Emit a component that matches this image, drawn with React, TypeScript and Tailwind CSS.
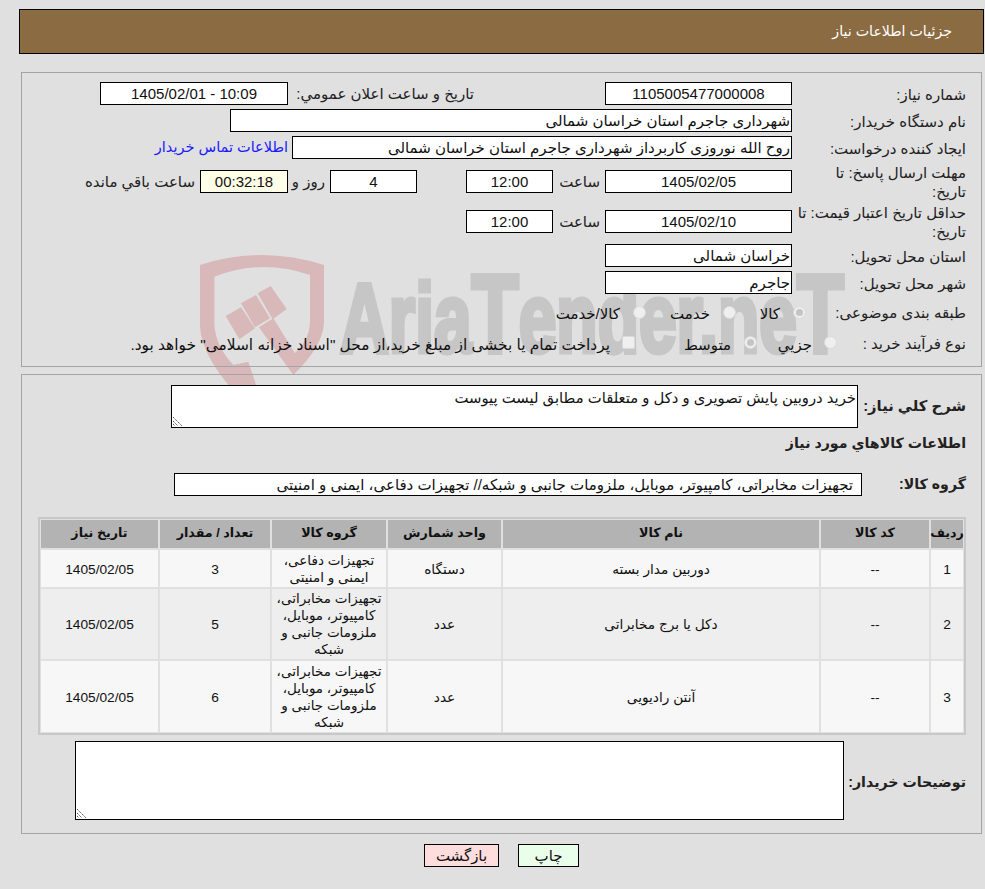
function Box({ className = '', children }: { className?: string; children?: React.ReactNode }) {
  return <div className={`flex shrink-0 items-center border border-black text-[15px] leading-none text-[#111] ${className}`}>{children}</div>;
}

function Label({ className = 'w-[189px] pt-[2px]', children }: { className?: string; children: React.ReactNode }) {
  return <div className={`shrink-0 pr-[15px] pl-[4px] text-[15px] leading-[19px] text-[#222] ${className}`}>{children}</div>;
}

function Radio({ checked }: { checked?: boolean }) {
  return (
    <span className="flex h-[13px] w-[13px] shrink-0 items-center justify-center rounded-full border border-[#dadada] bg-[#efefef]">
      {checked && <span className="h-[7px] w-[7px] rounded-full bg-[#c4c4c4]" />}
    </span>
  );
}

function Grip() {
  return (
    <svg className="absolute bottom-0 left-0" width="11" height="11" viewBox="0 0 11 11">
      <path d="M1 1 L10 10 M1 5 L6 10 M1 8 L3 10" stroke="#555" strokeWidth="1" strokeDasharray="1.5 0.8" />
    </svg>
  );
}

const rows = [
  { id: '1', name: 'دوربین مدار بسته', unit: 'دستگاه', group: 'تجهیزات دفاعی، ایمنی و امنیتی', qty: '3', h: 'h-[37px]' },
  { id: '2', name: 'دکل یا برج مخابراتی', unit: 'عدد', group: 'تجهیزات مخابراتی، کامپیوتر، موبایل، ملزومات جانبی و شبکه', qty: '5', h: 'h-[70px]' },
  { id: '3', name: 'آنتن رادیویی', unit: 'عدد', group: 'تجهیزات مخابراتی، کامپیوتر، موبایل، ملزومات جانبی و شبکه', qty: '6', h: 'h-[71px]' },
];

const cols = 'grid grid-cols-[32px_108px_316px_113px_114px_110px_117px] gap-[2px]';

export default function App() {
  return (
    <div dir="rtl" className="relative h-[889px] w-[985px] overflow-hidden bg-[#e0e0e0] font-['Liberation_Sans','DejaVu_Sans',sans-serif] text-[15px] text-[#111]">
      {/* watermark */}
      <div dir="ltr" className="pointer-events-none absolute top-[240px] left-[180px] h-[240px] w-[400px]">
        <svg width="400" height="240" viewBox="0 0 1200 720">
          <g fill="#d9b8ba">
            <path d="M60 75 Q245 15 432 75 V250 Q428 320 340 405 L237 262 L280 235 L345 340 Q388 300 390 250 V105 Q245 55 103 110 V255 Q108 320 160 375 L205 365 L230 440 L150 440 Q65 340 60 260 Z" />
            <path d="M137 228 L183 202 L225 265 L178 298 Z" />
            <path d="M183 190 L228 165 L270 235 L225 262 Z" />
            <path d="M233 160 L272 138 L320 207 L278 238 Z" />
          </g>
        </svg>
      </div>
      <div dir="ltr" className="pointer-events-none absolute top-[258px] left-[340px] origin-top-left scale-x-[0.69] text-[98px] leading-none font-bold whitespace-nowrap text-[#c6c6c6] [-webkit-text-stroke:5px_#c6c6c6]">
        Aria<span className="text-[112px]">T</span>ender.ne<span className="text-[112px]">T</span>
      </div>

      <div className="relative pt-[9px]">
        {/* header */}
        <div className="mr-[1px] ml-[19px] flex h-[45px] items-center border border-black bg-[#8b6b41] pr-[31px] text-[14.2px] text-white">
          جزئیات اطلاعات نیاز
        </div>

        {/* top panel */}
        <div className="mt-[18px] mr-[3px] ml-[21px] h-[295px] border border-[#a4a4a4] pt-[9px]">
          <div className="flex h-[23px] items-center">
            <Label>شماره نیاز:</Label>
            <Box className="h-[23px] w-[187px] justify-center bg-white">1105005477000008</Box>
            <div className="w-[317px] shrink-0 pt-[2px] pr-[131px] whitespace-nowrap text-[#222]">تاریخ و ساعت اعلان عمومي:</div>
            <Box className="h-[23px] w-[188px] justify-center bg-white">10:09 - 1405/02/01</Box>
          </div>
          <div className="mt-[4px] flex h-[23px] items-center">
            <Label>نام دستگاه خریدار:</Label>
            <Box className="h-[23px] w-[562px] bg-white pr-[1px]">شهرداری جاجرم استان خراسان شمالی</Box>
          </div>
          <div className="mt-[4px] flex h-[23px] items-center">
            <Label>ایجاد کننده درخواست:</Label>
            <Box className="h-[23px] w-[500px] bg-white pr-[1px]">روح الله نوروزی کاربرداز شهرداری جاجرم استان خراسان شمالی</Box>
            <span className="mr-[4px] text-[14.5px] whitespace-nowrap text-[#1a1aff]">اطلاعات تماس خریدار</span>
          </div>
          <div className="mt-[11px] flex h-[23px] items-center">
            <Label className="mt-[-7px] h-[23px] w-[189px] self-start">مهلت ارسال پاسخ: تا<br />تاریخ:</Label>
            <Box className="h-[23px] w-[187px] justify-center bg-white">1405/02/05</Box>
            <span className="w-[52px] shrink-0 pt-[2px] pr-[5px] text-[#222]">ساعت</span>
            <Box className="h-[23px] w-[87px] justify-center bg-white">12:00</Box>
            <span className="w-[49px] shrink-0" />
            <Box className="h-[23px] w-[87px] justify-center bg-white">4</Box>
            <span className="w-[42px] shrink-0 pt-[2px] pr-[5px] whitespace-nowrap text-[#222]">روز و</span>
            <Box className="h-[23px] w-[88px] justify-center bg-[#ffffe8]">00:32:18</Box>
            <span className="pt-[2px] pr-[5px] whitespace-nowrap text-[#222]">ساعت باقي مانده</span>
          </div>
          <div className="mt-[17px] flex h-[23px] items-center">
            <Label className="mt-[-7px] h-[23px] w-[189px] self-start">حداقل تاریخ اعتبار قیمت: تا<br />تاریخ:</Label>
            <Box className="h-[23px] w-[187px] justify-center bg-white">1405/02/10</Box>
            <span className="w-[52px] shrink-0 pt-[2px] pr-[5px] text-[#222]">ساعت</span>
            <Box className="h-[23px] w-[87px] justify-center bg-white">12:00</Box>
          </div>
          <div className="mt-[11px] flex h-[23px] items-center">
            <Label>استان محل تحویل:</Label>
            <Box className="h-[23px] w-[187px] bg-white pr-[1px]">خراسان شمالی</Box>
          </div>
          <div className="mt-[4px] flex h-[23px] items-center">
            <Label>شهر محل تحویل:</Label>
            <Box className="h-[23px] w-[187px] bg-white pr-[1px]">جاجرم</Box>
          </div>
          <div className="mt-[6px] flex h-[24px] items-center">
            <Label className="w-[147px] whitespace-nowrap">طبقه بندی موضوعی:</Label>
            <span className="mr-[28px] flex w-[70px] shrink-0 items-center gap-[13px]"><Radio checked /><span className="pt-[5px]">کالا</span></span>
            <span className="flex w-[90px] shrink-0 items-center gap-[13px]"><Radio /><span className="pt-[5px]">خدمت</span></span>
            <span className="flex items-center gap-[13px]"><Radio /><span className="pt-[5px]">کالا/خدمت</span></span>
          </div>
          <div className="mt-[6px] flex h-[24px] items-center">
            <Label className="w-[116px] pt-[2px] whitespace-nowrap">نوع فرآیند خرید :</Label>
            <span className="mr-[28px] flex w-[80px] shrink-0 items-center gap-[12px]"><Radio /><span className="pt-[6px]">جزیي</span></span>
            <span className="flex w-[122px] shrink-0 items-center gap-[13px]"><Radio checked /><span className="pt-[6px]">متوسط</span></span>
            <span className="flex items-center gap-[12px] whitespace-nowrap">
              <span className="h-[13px] w-[13px] shrink-0 rounded-[2px] border border-[#dadada] bg-[#efefef]" />
              <span className="pt-[6px] text-[15.4px]">پرداخت تمام یا بخشی از مبلغ خرید،از محل "اسناد خزانه اسلامی" خواهد بود.</span>
            </span>
          </div>
        </div>

        {/* bottom panel */}
        <div className="mt-[7px] mr-[3px] ml-[21px] h-[460px] border border-[#a4a4a4] pt-[10px]">
          <div className="flex h-[43px] items-center">
            <div className="w-[123px] shrink-0 pr-[15px] text-[14.8px] font-bold whitespace-nowrap text-[#222]">شرح کلي نیاز:</div>
            <div className="relative h-[43px] w-[687px] border border-black bg-white pt-[5px] pr-[1px] text-[14.8px] leading-none">
              خرید دروبین پایش تصویری و دکل و متعلقات مطابق لیست پیوست
              <Grip />
            </div>
          </div>
          <div className="mt-[6px] h-[18px] pr-[15px] text-[14.2px] leading-[18px] font-bold text-[#222]">اطلاعات کالاهاي مورد نیاز</div>
          <div className="mt-[21px] flex h-[23px] items-center">
            <div className="w-[119px] shrink-0 pr-[15px] text-[14.2px] font-bold text-[#222]">گروه کالا:</div>
            <Box className="h-[23px] w-[688px] bg-white pr-[8px]">تجهیزات مخابراتی، کامپیوتر، موبایل، ملزومات جانبی و شبکه// تجهیزات دفاعی، ایمنی و امنیتی</Box>
          </div>

          {/* table */}
          <div className="mt-[21px] mr-[15px] w-[928px] border-2 border-[#c8c8c8] p-[1px]">
            <div className={`${cols} h-[28px] text-[12.7px] font-bold`}>
              {['ردیف', 'کد کالا', 'نام کالا', 'واحد شمارش', 'گروه کالا', 'تعداد / مقدار', 'تاریخ نیاز'].map((t) => (
                <div key={t} className="flex items-center justify-center bg-[#b3b3b3] whitespace-nowrap text-[#111]">{t}</div>
              ))}
            </div>
            {rows.map((r, i) => (
              <div key={r.id} className={`${cols} mt-[2px] ${r.h} text-[13.7px]`}>
                {[r.id, '--', r.name, r.unit, r.group, r.qty, '1405/02/05'].map((t, j) => (
                  <div key={j} className={`flex items-center justify-center text-center ${j === 4 ? 'px-[2px] text-[13.5px] leading-[17px]' : 'pt-[3px]'} ${i === 1 ? 'bg-[#eeeeee]' : 'bg-[#f7f7f7]'}`}>
                    {t}
                  </div>
                ))}
              </div>
            ))}
          </div>

          <div className="mt-[6px] flex h-[79px] items-center">
            <div className="w-[137px] shrink-0 pt-[4px] pr-[15px] text-[14.2px] font-bold whitespace-nowrap text-[#222]">توضیحات خریدار:</div>
            <div className="relative h-[79px] w-[769px] border border-black bg-white">
              <Grip />
            </div>
          </div>
        </div>

        {/* buttons */}
        <div className="mt-[10px] mr-[406px] flex gap-[19px]">
          <button className="h-[23px] w-[61px] border border-black bg-[#eaffea] text-[15px] text-[#111]">چاپ</button>
          <button className="h-[23px] w-[75px] border border-black bg-[#ffdddd] text-[15px] text-[#111]">بازگشت</button>
        </div>
      </div>
    </div>
  );
}
